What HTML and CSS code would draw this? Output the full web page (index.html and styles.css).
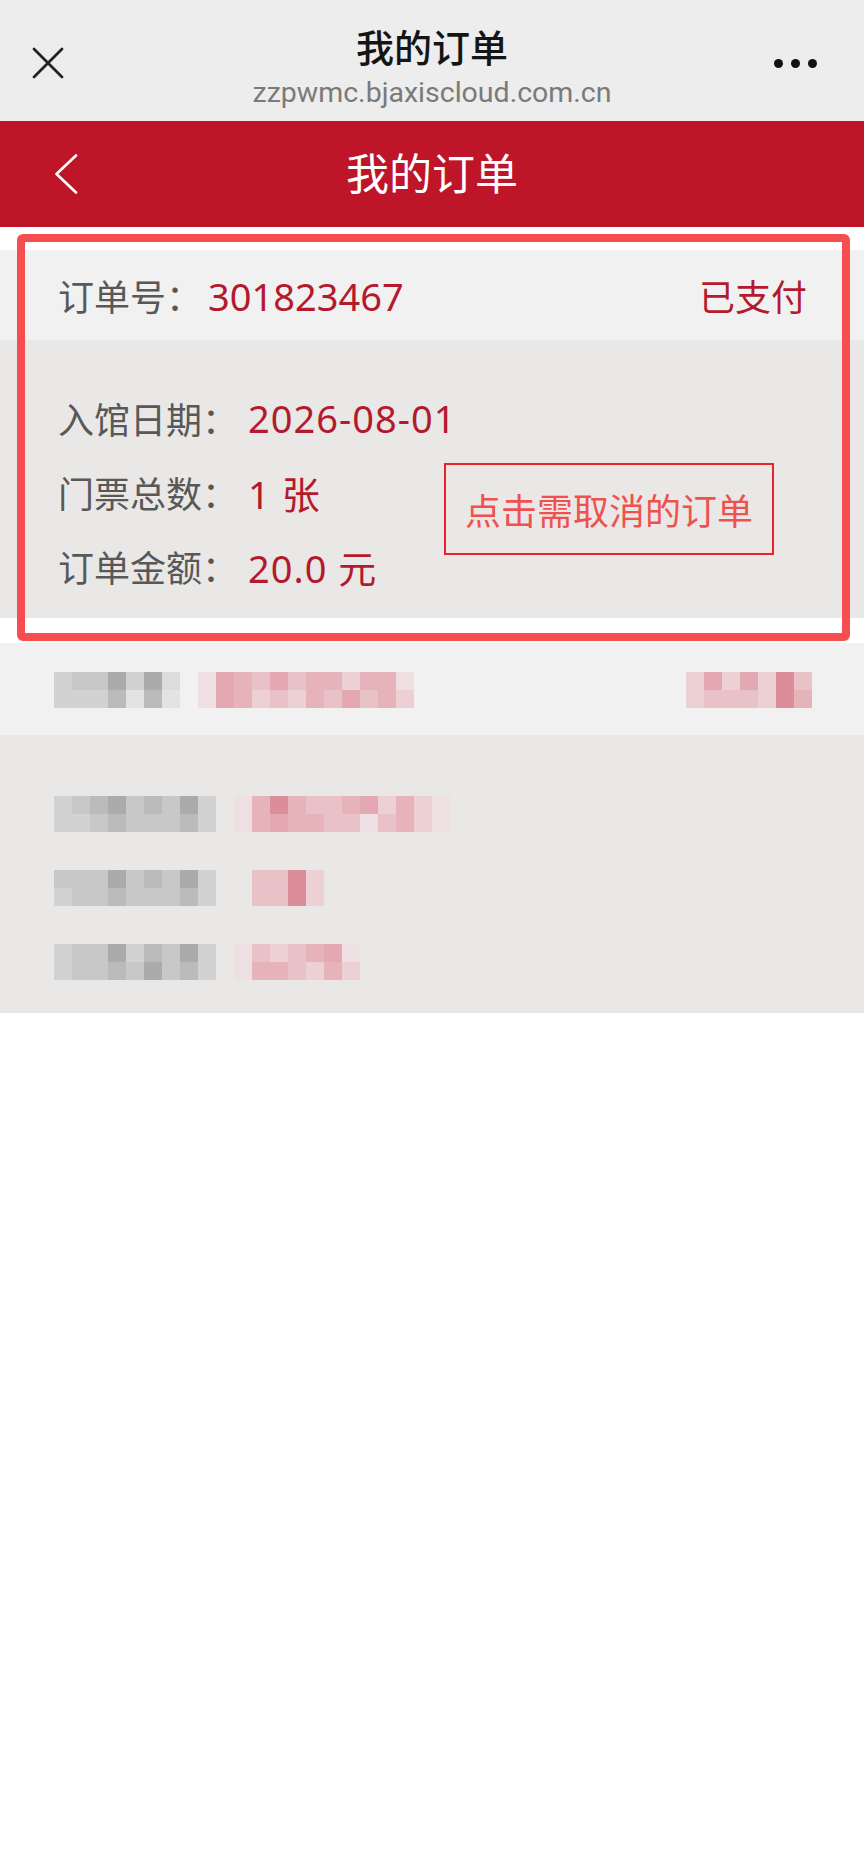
FILE: index.html
```html
<!DOCTYPE html>
<html lang="zh-CN">
<head>
  <meta charset="UTF-8">
  <meta name="viewport" content="width=device-width, initial-scale=1.0">
  <title>我的订单</title>
  <link rel="stylesheet" href="styles.css">
</head>
<body>
  <div class="browser-bar">
    <div class="browser-bar__left">
      <svg class="icon-close" width="32" height="32" viewBox="0 0 32 32">
        <path d="M2 2 L30 30 M30 2 L2 30" stroke="#222" stroke-width="2.8" stroke-linecap="round" fill="none"/>
      </svg>
    </div>
    <div class="browser-bar__center">
      <div class="browser-bar__title">我的订单</div>
      <div class="browser-bar__url">zzpwmc.bjaxiscloud.com.cn</div>
    </div>
    <div class="browser-bar__right">
      <span class="dot"></span><span class="dot"></span><span class="dot"></span>
    </div>
  </div>

  <div class="app-header">
    <div class="app-header__left">
      <svg class="icon-back" width="24" height="40" viewBox="0 0 24 40">
        <path d="M22 1.5 L2.5 20 L22 38.5" stroke="#fff" stroke-width="2.6" stroke-linecap="round" stroke-linejoin="round" fill="none"/>
      </svg>
    </div>
    <div class="app-header__title">我的订单</div>
    <div class="app-header__right"></div>
  </div>

  <div class="order-list">
    <div class="order-card">
      <div class="order-card__head">
        <div><span class="label">订单号：</span><span class="value value--num">301823467</span></div>
        <div class="status">已支付</div>
      </div>
      <div class="order-card__body">
        <div class="order-card__rows">
          <div class="row"><span class="label">入馆日期：</span><span class="value">2026-08-01</span></div>
          <div class="row"><span class="label">门票总数：</span><span class="value">1 张</span></div>
          <div class="row"><span class="label">订单金额：</span><span class="value">20.0 元</span></div>
        </div>
        <div class="cancel-btn">点击需取消的订单</div>
      </div>
    </div>

    <div class="order-card order-card--blur">
      <div class="order-card__head">
        <div class="mosaic-line">
          <div class="mosaic">
            <i class="g2"></i><i class="g2"></i><i class="g3"></i><i class="g2"></i><i class="g3"></i><i class="g2"></i><i class="g5"></i><i class="g4"></i><i class="g2"></i><i class="g0"></i><i class="g5"></i><i class="g4"></i><i class="g1"></i><i class="g0"></i>
          </div>
          <div class="mosaic mosaic--value">
            <i class="p0"></i><i class="p0"></i><i class="p4"></i><i class="p4"></i><i class="p3"></i><i class="p3"></i><i class="p2"></i><i class="p1"></i><i class="p4"></i><i class="p2"></i><i class="p2"></i><i class="p1"></i><i class="p3"></i><i class="p3"></i><i class="p3"></i><i class="p2"></i><i class="p1"></i><i class="p4"></i><i class="p3"></i><i class="p2"></i><i class="p3"></i><i class="p3"></i><i class="p0"></i><i class="p1"></i>
          </div>
        </div>
        <div class="mosaic">
          <i class="p1"></i><i class="p1"></i><i class="p4"></i><i class="p2"></i><i class="p1"></i><i class="p2"></i><i class="p4"></i><i class="p2"></i><i class="p1"></i><i class="p1"></i><i class="p5"></i><i class="p5"></i><i class="p2"></i><i class="p3"></i>
        </div>
      </div>
      <div class="order-card__body">
        <div class="order-card__rows">
          <div class="row">
            <div class="mosaic">
              <i class="g2"></i><i class="g2"></i><i class="g3"></i><i class="g2"></i><i class="g4"></i><i class="g3"></i><i class="g5"></i><i class="g4"></i><i class="g3"></i><i class="g3"></i><i class="g4"></i><i class="g3"></i><i class="g3"></i><i class="g3"></i><i class="g5"></i><i class="g4"></i><i class="g2"></i><i class="g2"></i>
            </div>
            <div class="mosaic mosaic--value">
              <i class="p0"></i><i class="p0"></i><i class="p3"></i><i class="p3"></i><i class="p5"></i><i class="p4"></i><i class="p3"></i><i class="p3"></i><i class="p2"></i><i class="p3"></i><i class="p2"></i><i class="p2"></i><i class="p3"></i><i class="p2"></i><i class="p4"></i><i class="p0"></i><i class="p1"></i><i class="p2"></i><i class="p3"></i><i class="p3"></i><i class="p1"></i><i class="p1"></i><i class="p0"></i><i class="p0"></i>
            </div>
          </div>
          <div class="row">
            <div class="mosaic">
              <i class="g3"></i><i class="g2"></i><i class="g3"></i><i class="g3"></i><i class="g3"></i><i class="g3"></i><i class="g5"></i><i class="g4"></i><i class="g3"></i><i class="g3"></i><i class="g4"></i><i class="g3"></i><i class="g3"></i><i class="g3"></i><i class="g5"></i><i class="g4"></i><i class="g2"></i><i class="g2"></i>
            </div>
            <div class="mosaic mosaic--value mosaic--short">
              <i class="p2"></i><i class="p2"></i><i class="p2"></i><i class="p2"></i><i class="p5"></i><i class="p5"></i><i class="p1"></i><i class="p1"></i>
            </div>
          </div>
          <div class="row">
            <div class="mosaic">
              <i class="g2"></i><i class="g2"></i><i class="g3"></i><i class="g3"></i><i class="g3"></i><i class="g3"></i><i class="g5"></i><i class="g4"></i><i class="g2"></i><i class="g3"></i><i class="g4"></i><i class="g5"></i><i class="g3"></i><i class="g3"></i><i class="g5"></i><i class="g4"></i><i class="g2"></i><i class="g2"></i>
            </div>
            <div class="mosaic mosaic--value">
              <i class="p0"></i><i class="p0"></i><i class="p2"></i><i class="p3"></i><i class="p1"></i><i class="p3"></i><i class="p2"></i><i class="p2"></i><i class="p3"></i><i class="p1"></i><i class="p4"></i><i class="p3"></i><i class="p0"></i><i class="p1"></i>
            </div>
          </div>
        </div>
      </div>
    </div>

    <div class="highlight"></div>
  </div>
</body>
</html>
```

FILE: styles.css
```css
/* General styles */
body {
  margin: 0;
  background: #fff;
  font-family: "Noto Sans", "Noto Sans CJK SC", sans-serif;
  color: #333;
}

/* Browser top bar */
.browser-bar {
  display: grid;
  grid-template-columns: 1fr auto 1fr;
  align-items: center;
  height: 121px;
  background: #ededed;
}

.browser-bar__left {
  padding-left: 32px;
  display: flex;
  padding-top: 5px;
}

.browser-bar__center {
  align-self: start;
  padding-top: 24px;
  text-align: center;
}

.browser-bar__title {
  font-size: 38px;
  font-weight: 500;
  color: #151515;
  line-height: 46px;
}

.browser-bar__url {
  font-family: Roboto, "Noto Sans", sans-serif;
  font-size: 28.5px;
  color: #7a7a7a;
  line-height: 40px;
  margin-top: 3px;
}

.browser-bar__right {
  display: flex;
  justify-content: flex-end;
  gap: 8px;
  padding-right: 47px;
  padding-top: 5px;
}

.dot {
  width: 9px;
  height: 9px;
  border-radius: 50%;
  background: #111;
}

/* App header */
.app-header {
  display: grid;
  grid-template-columns: 1fr auto 1fr;
  align-items: center;
  height: 106px;
  background: #be1528;
}

.app-header__left {
  padding-left: 54px;
  display: flex;
}

.app-header__title {
  font-size: 43px;
  color: #fff;
  line-height: 50px;
}

/* Orders */
.order-list {
  position: relative;
  padding-top: 23px;
  display: flex;
  flex-direction: column;
  gap: 25px;
}

.order-card__head {
  display: flex;
  justify-content: space-between;
  align-items: center;
  height: 90px;
  padding: 0 57px 0 58px;
  background: #f1f1f1;
  white-space: nowrap;
}

.order-card__body {
  display: flex;
  height: 278px;
  box-sizing: border-box;
  padding: 41px 0 15px 58px;
  background: #e9e8e6;
}

.order-card__rows {
  display: flex;
  flex-direction: column;
  flex: 1;
  min-width: 0;
}

.row {
  display: flex;
  align-items: center;
  height: 74px;
  white-space: nowrap;
}

.label {
  font-size: 36px;
  color: #585858;
}

.value {
  font-size: 38px;
  color: #b41a2e;
  margin-left: 10px;
}

.row .value {
  letter-spacing: 1px;
}

.value--num {
  margin-left: 6px;
}

.status {
  font-size: 36px;
  color: #b41a2e;
}

.cancel-btn {
  margin: 82px 90px 0 0;
  align-self: flex-start;
  flex-shrink: 0;
  width: 330px;
  height: 92px;
  box-sizing: border-box;
  border: 2px solid #e8232b;
  display: flex;
  align-items: center;
  justify-content: center;
  font-size: 36px;
  color: #f0514f;
  white-space: nowrap;
}

/* Pixelated second card */
.order-card--blur .order-card__head {
  padding: 2px 52px 0 54px;
}

.order-card--blur .order-card__body {
  padding: 42px 0 13px 54px;
}

.mosaic-line {
  display: flex;
}

.mosaic {
  display: grid;
  grid-template-rows: 18px 18px;
  grid-auto-flow: column;
  grid-auto-columns: 18px;
}

.mosaic i {
  display: block;
}

.mosaic--value {
  margin-left: 18px;
}

.mosaic--short {
  margin-left: 36px;
}

.g0 { background: #e3e3e3; }
.g1 { background: #dcdcdc; }
.g2 { background: #d2d2d2; }
.g3 { background: #c8c8c8; }
.g4 { background: #bbbbbb; }
.g5 { background: #ababab; }

.p0 { background: #eedfe2; }
.p1 { background: #ecd0d4; }
.p2 { background: #e9c2c8; }
.p3 { background: #e6b3bb; }
.p4 { background: #e3a8b2; }
.p5 { background: #dc8d9a; }

/* Annotation frame round the first order */
.highlight {
  position: absolute;
  left: 17px;
  top: 7px;
  width: 833px;
  height: 407px;
  box-sizing: border-box;
  border: 8px solid #f64d50;
  border-radius: 6px;
  pointer-events: none;
}
```
